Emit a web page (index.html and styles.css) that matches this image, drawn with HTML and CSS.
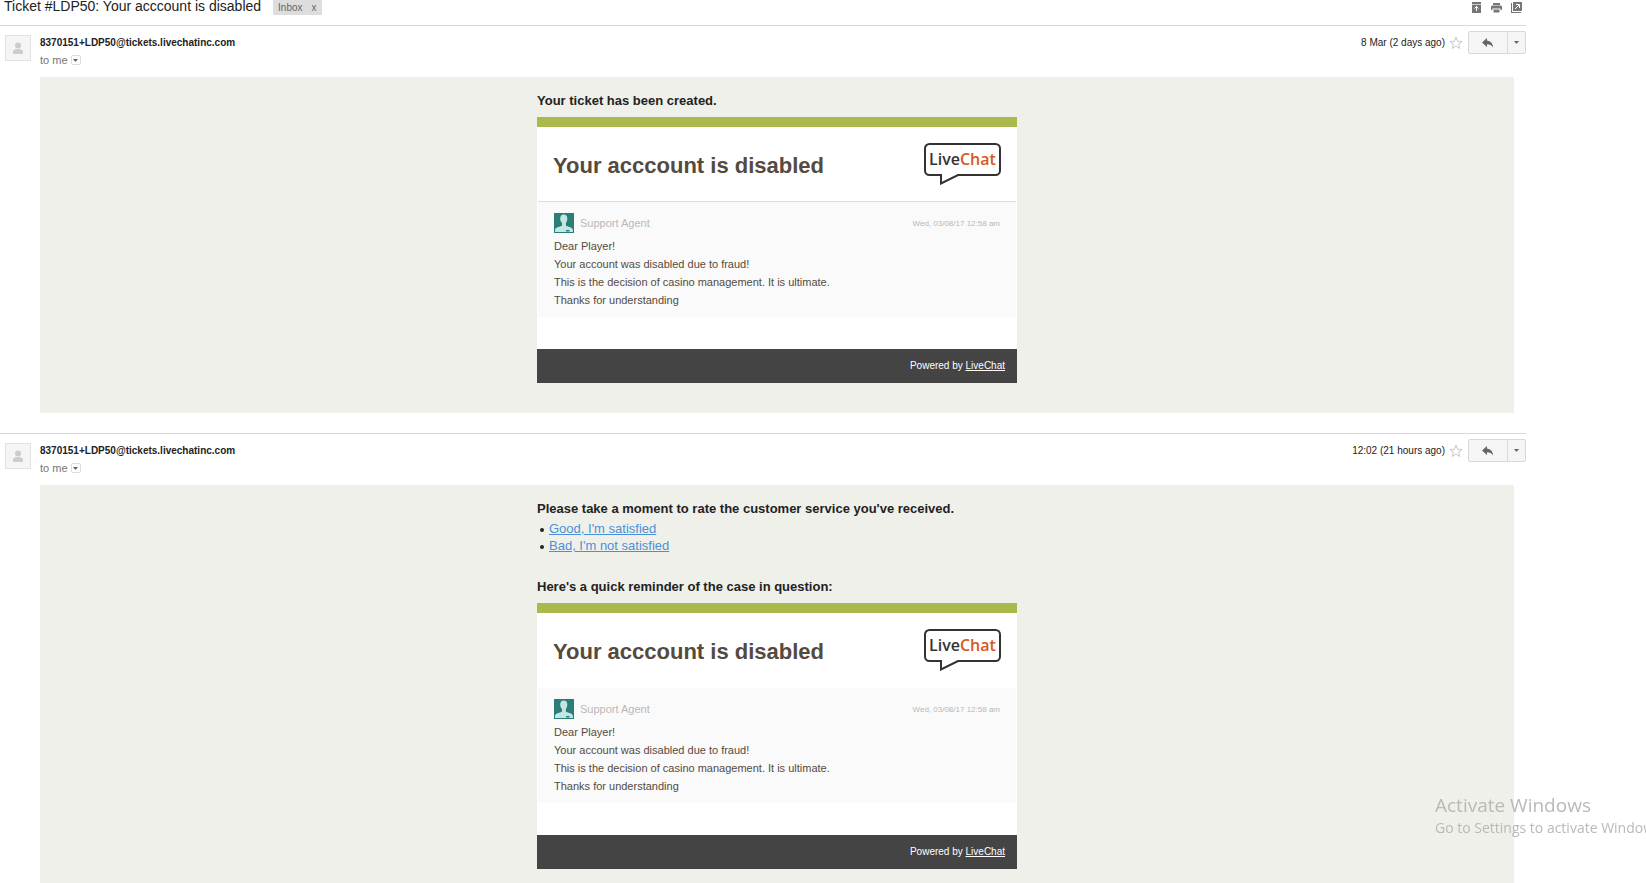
FILE: index.html
```html
<!DOCTYPE html>
<html lang="en">
<head>
<meta charset="utf-8">
<title>Ticket #LDP50: Your acccount is disabled</title>
<link rel="stylesheet" href="styles.css">
</head>
<body>
<svg class="defs" aria-hidden="true">
  <symbol id="person" viewBox="0 0 24 24"><circle cx="12" cy="9.500" r="3" fill="#ccc"/><path d="M7 18v-2.500q0-2.500 5-2.500t5 2.500V18z" fill="#ccc"/></symbol>
  <symbol id="star" viewBox="0 0 14 14"><path d="M7 1.200 8.600 5.300 13 5.500 9.600 8.200 10.800 12.500 7 10.100 3.200 12.500 4.400 8.200 1 5.500 5.400 5.300z" fill="#fff" stroke="#c8c8c8" stroke-width="1"/></symbol>
  <symbol id="reply" viewBox="0 0 12 10"><path d="M5 0v2.500Q10.500 3 11 9.500 9 6.200 5 6.300V9L0 4.500z" fill="#666"/></symbol>
  <symbol id="down" viewBox="0 0 5 3"><path d="M0 0h5L2.500 3z" fill="#666"/></symbol>
  <symbol id="agent" viewBox="0 0 20 20"><path d="M0 0h20v20H0z" fill="#2b7d78"/><path d="M9.700 1.500c2.600 0 3.800 1.800 3.600 4.500-.1 2-.8 3-1.400 4v2.500c1 1.200 7 1.600 7 4.500V19H1v-2c0-2.900 6-3.300 7-4.500V10C7.200 9 6.300 8 6.200 6c-.1-2.700 1-4.500 3.500-4.500z" fill="#c3e6e4"/><path d="M12 17h3.500v1.500H12z" fill="#2b7d78"/></symbol>
  <symbol id="bubble" viewBox="0 0 77 42"><path d="M5.500 1h66a4.500 4.500 0 0 1 4.500 4.500v22a4.500 4.500 0 0 1-4.500 4.500H34L17 40.500V32H5.500A4.500 4.500 0 0 1 1 27.500v-22A4.500 4.500 0 0 1 5.500 1z" fill="#fff" stroke="#333" stroke-width="2"/></symbol>
</svg>
<main class="thread">
  <header class="subject-bar">
    <h1 class="subject">Ticket #LDP50: Your acccount is disabled</h1>
    <span class="label">Inbox <button class="label-remove" aria-label="Remove label">x</button></span>
    <div class="tools">
      <button class="icon-button" aria-label="Expand all"><svg width="11" height="11" viewBox="0 0 11 11"><path d="M1 0h9v11H1z" fill="#777"/><path d="M1 2.500h9" stroke="#ccc"/><path d="M5.500 9V4.500M3.500 6.500l2-2 2 2" fill="none" stroke="#fff" stroke-width="1"/></svg></button>
      <button class="icon-button" aria-label="Print"><svg width="11" height="11" viewBox="0 0 11 11"><path d="M2 1h7v2H2zM1 3.500h9l1 1V8H9.500V6.500h-8V8H0V4.500zM2.500 7.500h6v3h-6z" fill="#777"/></svg></button>
      <button class="icon-button" aria-label="Open in new window"><svg width="11" height="11" viewBox="0 0 11 11"><path d="M0 1h1v9h9v1H0z" fill="#777"/><path d="M2 0h9v9H2z" fill="#777"/><path d="M4 7l4-4M5 2.500h3.500V6" fill="none" stroke="#fff"/></svg></button>
    </div>
  </header>

  <article class="message">
    <header class="message-head">
      <span class="avatar"><svg width="24" height="24"><use href="#person"/></svg></span>
      <div class="sender">
        <strong class="address">8370151+LDP50@tickets.livechatinc.com</strong>
        <span class="to">to me <button class="details" aria-label="Show details"><svg width="5" height="3"><use href="#down"/></svg></button></span>
      </div>
      <div class="meta">
        <time class="date">8 Mar (2 days ago)</time>
        <button class="icon-button" aria-label="Star"><svg width="14" height="14"><use href="#star"/></svg></button>
        <div class="actions">
          <button class="reply" aria-label="Reply"><svg width="12" height="10"><use href="#reply"/></svg></button>
          <button class="more" aria-label="More"><svg width="5" height="3"><use href="#down"/></svg></button>
        </div>
      </div>
    </header>
    <div class="message-body">
      <div class="mail">
        <h2 class="lead">Your ticket has been created.</h2>
        <section class="card">
          <div class="card-head card-head-ruled">
            <h3 class="card-title">Your acccount is disabled</h3>
            <svg class="logo" width="77" height="42" role="img" aria-label="LiveChat"><use href="#bubble"/><text class="logo-text" x="5" y="22">Live<tspan class="logo-accent">Chat</tspan></text></svg>
          </div>
          <div class="entry">
            <div class="entry-head">
              <svg width="20" height="20"><use href="#agent"/></svg>
              <span class="agent">Support Agent</span>
              <time class="stamp">Wed, 03/08/17 12:58 am</time>
            </div>
            <p class="text">Dear Player!<br>Your account was disabled due to fraud!<br>This is the decision of casino management. It is ultimate.<br>Thanks for understanding</p>
          </div>
          <footer class="card-foot">Powered by <a class="foot-link" href="#">LiveChat</a></footer>
        </section>
      </div>
    </div>
  </article>

  <article class="message">
    <header class="message-head">
      <span class="avatar"><svg width="24" height="24"><use href="#person"/></svg></span>
      <div class="sender">
        <strong class="address">8370151+LDP50@tickets.livechatinc.com</strong>
        <span class="to">to me <button class="details" aria-label="Show details"><svg width="5" height="3"><use href="#down"/></svg></button></span>
      </div>
      <div class="meta">
        <time class="date">12:02 (21 hours ago)</time>
        <button class="icon-button" aria-label="Star"><svg width="14" height="14"><use href="#star"/></svg></button>
        <div class="actions">
          <button class="reply" aria-label="Reply"><svg width="12" height="10"><use href="#reply"/></svg></button>
          <button class="more" aria-label="More"><svg width="5" height="3"><use href="#down"/></svg></button>
        </div>
      </div>
    </header>
    <div class="message-body">
      <div class="mail">
        <h2 class="lead">Please take a moment to rate the customer service you've received.</h2>
        <ul class="ratings">
          <li><a class="rating" href="#">Good, I'm satisfied</a></li>
          <li><a class="rating" href="#">Bad, I'm not satisfied</a></li>
        </ul>
        <h2 class="lead">Here's a quick reminder of the case in question:</h2>
        <section class="card">
          <div class="card-head">
            <h3 class="card-title">Your acccount is disabled</h3>
            <svg class="logo" width="77" height="42" role="img" aria-label="LiveChat"><use href="#bubble"/><text class="logo-text" x="5" y="22">Live<tspan class="logo-accent">Chat</tspan></text></svg>
          </div>
          <div class="entry">
            <div class="entry-head">
              <svg width="20" height="20"><use href="#agent"/></svg>
              <span class="agent">Support Agent</span>
              <time class="stamp">Wed, 03/08/17 12:58 am</time>
            </div>
            <p class="text">Dear Player!<br>Your account was disabled due to fraud!<br>This is the decision of casino management. It is ultimate.<br>Thanks for understanding</p>
          </div>
          <footer class="card-foot">Powered by <a class="foot-link" href="#">LiveChat</a></footer>
        </section>
      </div>
    </div>
  </article>
</main>
<aside class="watermark">
  <p class="watermark-title">Activate Windows</p>
  <p class="watermark-text">Go to Settings to activate Windows.</p>
</aside>
</body>
</html>
```
FILE: styles.css
```css
* { box-sizing: border-box; }
html { scrollbar-width: none; }
body {
  margin: 0;
  background: #fff;
  color: #222;
  font-family: "Liberation Sans", Arial, sans-serif;
  font-size: 13px;
  overflow-x: hidden;
}
h1, h2, h3, p, ul { margin: 0; padding: 0; }
button { font: inherit; color: inherit; padding: 0; border: 0; background: none; }
svg { display: block; }
.defs { position: absolute; width: 0; height: 0; }

.thread { margin-right: 120px; }
.subject-bar { display: flex; align-items: flex-start; height: 25px; padding: 0 4px; }
.subject { font-size: 14px; font-weight: normal; line-height: 13px; }
.label {
  display: flex;
  gap: 9px;
  margin-left: 12px;
  padding: 0 5px;
  background: #ddd;
  color: #666;
  font-size: 10px;
  line-height: 15px;
}
.tools { display: flex; gap: 9px; margin-left: auto; padding-top: 2px; }

.message { border-top: 1px solid #d8d8d8; padding-bottom: 20px; }
.message-head { display: flex; align-items: flex-start; height: 51px; padding-left: 5px; }
.avatar { margin-top: 9px; border: 1px solid #e2e2e2; background: #f5f5f5; }
.sender { display: flex; flex-direction: column; gap: 3px; margin: 10px 0 0 9px; line-height: 14px; }
.address { font-size: 10px; }
.to { display: flex; align-items: center; gap: 3px; color: #777; font-size: 11px; }
.details {
  display: grid;
  place-items: center;
  width: 10px;
  height: 10px;
  border: 1px solid #ddd;
  border-radius: 2px;
}
.meta { display: flex; align-items: center; margin: 5px 0 0 auto; }
.date { margin-right: 4px; font-size: 10px; }
.actions {
  display: flex;
  height: 23px;
  margin-left: 5px;
  border: 1px solid #d8d8d8;
  border-radius: 2px;
  background: #f5f5f5;
}
.reply, .more { display: grid; place-items: center; }
.reply { width: 39px; border-right: 1px solid #d8d8d8; }
.more { width: 17px; }

.message-body { margin: 0 12px 0 40px; padding: 14px 0 30px; background: #eff0ea; }
.mail { width: 480px; max-width: 100%; margin: 0 auto; }
.lead { font-size: 13px; line-height: 20px; }
.ratings { margin: 1px 0 23px; padding-left: 12px; line-height: 17px; list-style: none; }
.ratings li::before {
  content: "";
  display: inline-block;
  width: 4px;
  height: 4px;
  margin: 0 5px 1px -9px;
  border-radius: 50%;
  background: #222;
}
.rating { color: #4a90d9; }
.card { margin-top: 6px; border-top: 10px solid #abb84c; background: #fff; }
.card-head {
  display: flex;
  justify-content: space-between;
  align-items: flex-start;
  height: 75px;
  margin: 0 1px;
  padding: 16px 15px 0;
  border-bottom: 1px solid transparent;
}
.card-head-ruled { border-bottom-color: #ddd; }
.card-title { color: #544a40; font-size: 22px; line-height: 46px; }
.logo-text { fill: #333; font-family: "Open Sans", "Noto Sans", sans-serif; font-size: 16px; font-weight: 600; }
.logo-accent { fill: #d35a24; }
.entry { margin: 0 1px; padding: 11px 16px 8px; background: #fafafa; }
.entry-head { display: flex; align-items: center; gap: 6px; margin-bottom: 4px; }
.agent { color: #b8b8b8; font-size: 11px; }
.stamp { margin-left: auto; color: #b8b8b8; font-size: 8px; }
.text { color: #544a40; font-size: 11px; line-height: 18px; }
.card-foot {
  margin-top: 32px;
  padding: 0 12px;
  background: #444;
  color: #fff;
  font-size: 10px;
  line-height: 34px;
  text-align: right;
}
.foot-link { color: inherit; }

.watermark {
  position: fixed;
  left: calc(100% - 211px);
  bottom: 45px;
  width: 211px;
  overflow: hidden;
  color: #b9b9b9;
  font-family: "Open Sans", "Noto Sans", sans-serif;
  white-space: nowrap;
}
.watermark-title { font-size: 19px; line-height: 26px; }
.watermark-text { font-size: 14px; line-height: 20px; }
```
